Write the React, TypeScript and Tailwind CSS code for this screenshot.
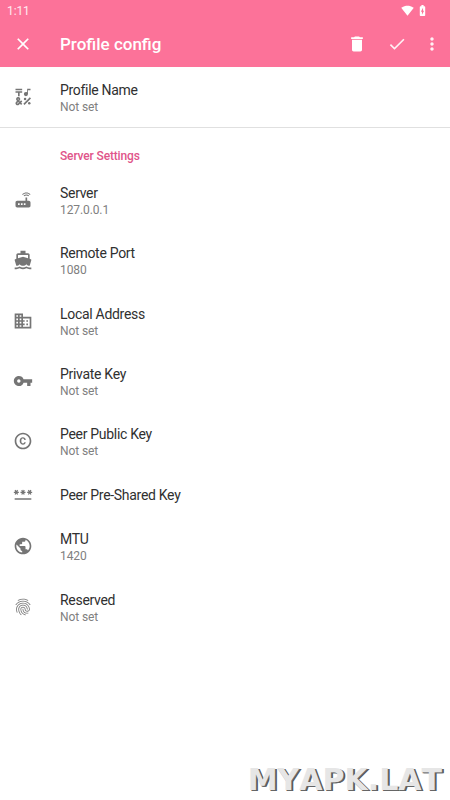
import { IconType } from "react-icons";
import {
  MdBatteryChargingFull,
  MdClose,
  MdCopyright,
  MdDelete,
  MdDirectionsBoat,
  MdDomain,
  MdDone,
  MdEmojiSymbols,
  MdFingerprint,
  MdMoreVert,
  MdPassword,
  MdPublic,
  MdRouter,
  MdSignalWifi4Bar,
  MdVpnKey,
} from "react-icons/md";

interface PreferenceProps {
  icon: IconType;
  title: string;
  summary?: string;
}

const serverSettings: PreferenceProps[] = [
  { icon: MdRouter, title: "Server", summary: "127.0.0.1" },
  { icon: MdDirectionsBoat, title: "Remote Port", summary: "1080" },
  { icon: MdDomain, title: "Local Address", summary: "Not set" },
  { icon: MdVpnKey, title: "Private Key", summary: "Not set" },
  { icon: MdCopyright, title: "Peer Public Key", summary: "Not set" },
  { icon: MdPassword, title: "Peer Pre-Shared Key" },
  { icon: MdPublic, title: "MTU", summary: "1420" },
  { icon: MdFingerprint, title: "Reserved", summary: "Not set" },
];

function Preference({ icon: Icon, title, summary }: PreferenceProps) {
  return (
    <div
      className={`flex items-center pl-[13px] ${
        summary ? "h-[60.4px]" : "h-[44.6px]"
      }`}
    >
      <Icon className="mr-[27px] mb-[1.2px] size-5 shrink-0 text-[#757575]" />
      <div className="pt-[1.7px]">
        <p className="text-[14px] leading-[17px] tracking-[-0.3px] text-[#303030]">
          {title}
        </p>
        {summary ? (
          <p className="text-[12px] leading-[16px] tracking-[-0.1px] text-[#808080]">
            {summary}
          </p>
        ) : null}
      </div>
    </div>
  );
}

function AppBar() {
  return (
    <header className="h-[67px] bg-[#fc7299] text-white">
      <div className="flex h-[21px] items-center justify-between pl-[7px] pr-[21px]">
        <span className="text-[12px] tracking-[-0.1px] text-white/85">1:11</span>
        <div className="flex items-center gap-[2px] pb-px">
          <MdSignalWifi4Bar className="size-[13px]" />
          <MdBatteryChargingFull className="size-[13px]" />
        </div>
      </div>
      <div className="flex h-[46px] items-center pl-[13px] pr-2">
        <button>
          <MdClose className="size-5" />
        </button>
        <h1 className="ml-[27px] flex-1 pt-px text-[17px] font-medium">
          Profile config
        </h1>
        <button className="mr-5">
          <MdDelete className="size-5" />
        </button>
        <button className="mr-[15px]">
          <MdDone className="size-5 text-white/90" />
        </button>
        <button>
          <MdMoreVert className="size-5 text-white/90" />
        </button>
      </div>
    </header>
  );
}

export default function App() {
  return (
    <div className="flex h-[800px] w-[450px] flex-col overflow-hidden bg-white font-[Roboto,sans-serif]">
      <AppBar />
      <main className="flex-1">
        <div className="border-b border-[#e0e0e0]">
          <Preference
            icon={MdEmojiSymbols}
            title="Profile Name"
            summary="Not set"
          />
        </div>
        <h2 className="h-[41.9px] pl-[60px] pt-5 text-[12px] leading-[16px] font-medium tracking-[-0.15px] text-[#e0558a]">
          Server Settings
        </h2>
        {serverSettings.map((item) => (
          <Preference key={item.title} {...item} />
        ))}
      </main>
      <footer className="flex justify-end pr-2 pb-[2px] font-['DejaVu_Sans',sans-serif] text-[30px] leading-[36px] font-bold text-[#e6e6e6] [font-kerning:none] [text-shadow:1px_1px_0_#666,2px_1px_0_#555]">
        MYAPK.LAT
      </footer>
    </div>
  );
}
